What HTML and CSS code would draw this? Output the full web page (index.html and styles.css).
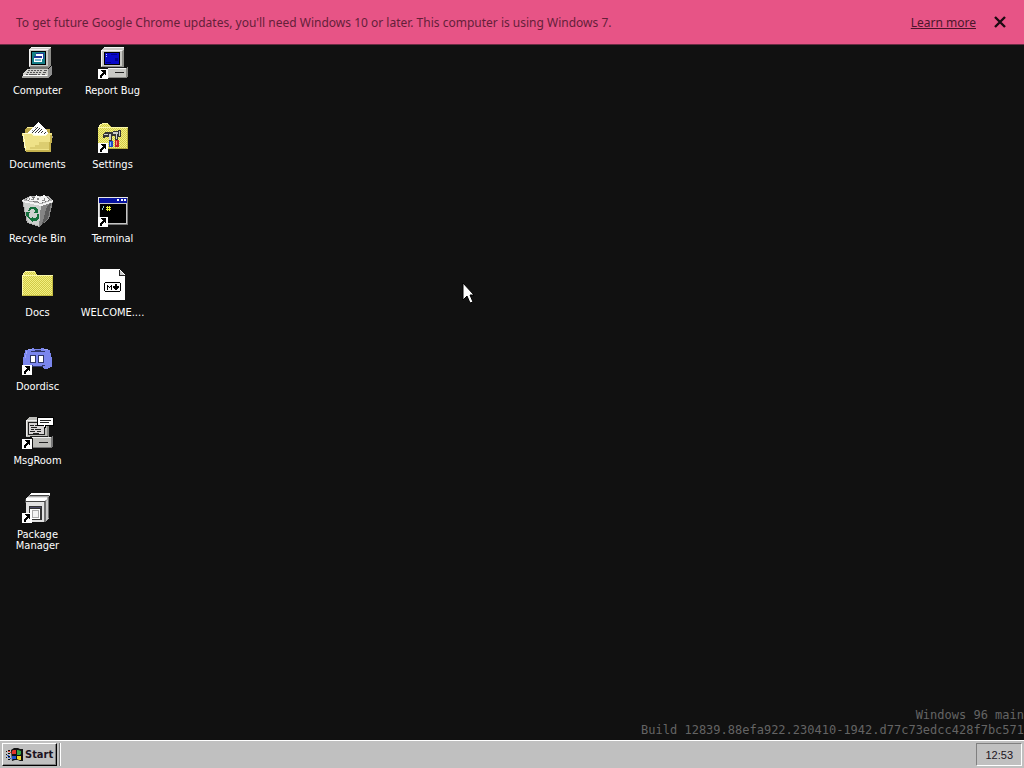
FILE: index.html
```html
<!DOCTYPE html>
<html lang="en">
<head>
  <meta charset="utf-8">
  <meta name="viewport" content="width=device-width, initial-scale=1">
  <link rel="stylesheet" href="styles.css">
  <title>Windows 96</title>
</head>
<body>

<!-- shared icon parts -->
<svg class="defs" aria-hidden="true">
  <defs>
    <pattern id="dither" width="2" height="2" patternUnits="userSpaceOnUse">
      <path fill="#f4f080" d="M0 0h2v2h-2z"/>
      <path fill="#d0ca48" d="M0 0h1v1h-1zM1 1h1v1h-1z"/>
    </pattern>
    <g id="shortcut">
      <path fill="#fff" d="M1 22h10v10H1z"/>
      <path fill="#000" d="M4 23h5v5h-1v-1h-1v1h-1v1h-1v2h-2v-3h1v-1h1v-1h1v-1h-1v-1h-1z"/>
    </g>
  </defs>
</svg>

<div class="container">
  <div class="infobar">
    <span class="message">To get future Google Chrome updates, you'll need Windows 10 or later. This computer is using Windows 7.</span>
    <a class="learnMore" href="#">Learn more</a>
    <button class="closeBtn" type="button" aria-label="Close">
      <svg width="12" height="12" viewBox="0 0 12 12"><path d="M1 1l10 10M11 1l-10 10" fill="none" stroke="#1c0a12" stroke-width="2.4"/></svg>
    </button>
  </div>

  <main class="desktop">
    <div class="icons">
      <button class="icon" type="button">
        <svg viewBox="0 0 32 32">
          <path fill="#c8c8c4" d="M7 2l2-2h20v1l-2 2v17H7z"/>
          <path fill="#f4f4f4" d="M9 0h20v1H9zM7 2h19v1H7zM7 2h1v17H7z"/>
          <path fill="#8c8c88" d="M26 3l3-2v18l-3 2zM8 19h18v1H8z"/>
          <path fill="#000" d="M9 4h15v14H9z"/>
          <path fill="#167f88" d="M10 5h13v12H10z"/>
          <path fill="#fff" d="M14 6h8v6h-8zM12 9h8v6h-8z"/>
          <path fill="#22399c" d="M14 6h8v1h-8zM12 9h8v2h-8zM21 7h1v5h-1z"/>
          <path fill="#73b8cc" d="M13 12h6v2h-6z"/>
          <path fill="#73736f" d="M8 20h18v2H8z"/>
          <path fill="#d0d0cc" d="M5 22h21l3-2-3 9H1v-2z"/>
          <path fill="#909090" d="M26 22l4-3v8l-4 4z"/>
          <path fill="#555" d="M6 23h2v1H6zM9 23h2v1H9zM12 23h2v1h-2zM15 23h2v1h-2zM18 23h2v1h-2zM22 23h3v1h-3zM5 25h2v1H5zM8 25h2v1H8zM11 25h2v1h-2zM14 25h2v1h-2zM17 25h2v1h-2zM21 25h3v1h-3zM4 27h2v1H4zM7 27h8v1H7zM16 27h2v1h-2zM20 27h3v1h-3z"/>
          <path fill="#fff" d="M1 28h24v1H1z"/>
          <path fill="#a0a09c" d="M0 29h26v2H0z"/>
        </svg>
        <span class="label">Computer</span>
      </button>
      <button class="icon" type="button">
        <svg viewBox="0 0 32 32">
          <path fill="#b9a648" d="M3 8l2-2h6l2 2h15v14H3z"/>
          <path fill="#fbf3a0" d="M5 6h6v1H5z"/>
          <path fill="#fff" d="M6 12L16 1l3 2 12 14-10 9z"/>
          <path fill="#8f8f8f" d="M10 9h1v1h-1zM13 6h1v1h-1zM27 12h1v2h-1zM30 15h1v2h-1z"/>
          <path stroke="#333" fill="none" d="M10 12l6-6M13 12l5-5M16 12l4-4M19 12l2-2M22 13l2-2"/>
          <path fill="#efe288" d="M0 12h10l2 2h12l2-2h4l-2 18H3z"/>
          <path fill="#fffccf" d="M0 12h10l2 2h12v1H11l-2-2H1zM1 14h1l2 14H3z"/>
          <path fill="#c5b24e" d="M28 14h2l-1 17H4v-2h23z"/>
          <path fill="#dccd70" d="M17 21h10v7H8v-2h5v-2h4z"/>
        </svg>
        <span class="label">Documents</span>
      </button>
      <button class="icon" type="button">
        <svg viewBox="0 0 32 32">
          <path fill="#b0b0b0" d="M0 5l8-4h18l5 5-4 18-10 8-12-4z"/>
          <path fill="#858585" d="M19 9l12-3-4 18-10 8z"/>
          <path fill="#5c5c5c" d="M25 11l4-3-3 16-6 5z"/>
          <path fill="#cdd0ce" d="M1 6l18 4-2 21-11-4z"/>
          <path fill="#f2f2f2" d="M0 5l19 4v2L1 7zM19 9l12-4v2l-12 4z"/>
          <path fill="#6c6c6c" d="M3 5l8-3h14l3 3-9 3z"/>
          <path fill="#f4f4f4" d="M4 5l4-4 4 3 2-4 4 2 4-2 3 3 2 2-8 3z"/>
          <path fill="#8b8b8b" d="M9 4h3v1H9zM15 3h2v2h-2zM20 5h3v1h-3zM12 6h4v1h-4zM22 3h1v2h-1zM7 3h1v2H7z"/>
          <path fill="#14703c" d="M8 12h5l2 2 1-1v5h-4l1-2-2-2H9l-1 2H6zM4 17h5l-2 1v3l2 3H7l-3-4zM15 19h2v4l-3 3h-3v2l-3-4 3-2v1h2l2-2z"/>
        </svg>
        <span class="label">Recycle Bin</span>
      </button>
      <button class="icon" type="button">
        <svg viewBox="0 0 32 32">
          <path fill="url(#dither)" d="M0 7l1-1V4l2-2h10l2 4h16v21H0z"/>
          <path fill="#fbf8a8" d="M3 2h10v1H3zM2 3h1v1H2zM1 4h1v2H1zM0 6h31v1H0zM0 7h1v19H0z"/>
          <path fill="#c5bd43" d="M1 26h30v1H1zM30 7h1v20h-1z"/>
        </svg>
        <span class="label">Docs</span>
      </button>
      <button class="icon" type="button">
        <svg viewBox="0 0 32 32">
          <path fill="#7b86ee" d="M6 6h4V5h12v1h4v1h2v3h1v4h1v10h-2v1h-2v1h-4v-1h-1v-2H10v2H9v1H6v-1H3v-1H1V14h1v-4h1V7h3z"/>
          <path fill="#9da6f8" d="M6 6h4v1H6zM22 6h4v1h-4zM4 8h1v3H4zM3 12h1v3H3z"/>
          <path fill="#111" d="M12 5h7v1h-7z"/>
          <path fill="#2e3568" d="M9 8h4V7h6v1h4v1H9zM8 12h6v8H8zM16 12h6v8h-6zM8 22h3v1h9v-1h3v1h-2v1H10v-1H8z"/>
          <path fill="#fff" d="M9 13h4v6H9zM17 13h4v6h-4z"/>
          <use href="#shortcut" x="-1"/>
        </svg>
        <span class="label">Doordisc</span>
      </button>
      <button class="icon" type="button">
        <svg viewBox="0 0 32 32">
          <path fill="#bdbdb9" d="M4 3l3-3h20v18l-2 2H4z"/>
          <path fill="#eee" d="M4 3h21v1H4zM4 3h1v16H4z"/>
          <path fill="#858581" d="M25 4l2-2v17l-2 2z"/>
          <path fill="#222" d="M6 5h17v13H6z"/>
          <path fill="#d8d5d5" d="M7 6h15v11H7z"/>
          <path fill="#222" d="M8 8h4v1H8zM13 8h3v1h-3zM9 10h6v1H9zM9 12h3v1H9zM13 12h6v1h-6zM8 14h5v1H8zM15 14h4v1h-4zM11 16h6v1h-6z"/>
          <path fill="#000" d="M15 0h17v9h-8v2h-1v1h-1V9h-7z"/>
          <path fill="#fff" d="M16 1h15v7h-8v2h-1V8h-6z"/>
          <path fill="#222" d="M18 3h11v1H18zM18 5h9v1h-9zM8 19h18v1H8z"/>
          <path fill="#bdbdb9" d="M11 21h19v10H11z"/>
          <path fill="#eee" d="M10 20h20v1H10z"/>
          <path fill="#777" d="M29 20l2-1v11l-2 1zM11 30h19v1H11z"/>
          <path fill="#222" d="M17 25h9v1h-9z"/>
          <use href="#shortcut" x="-1"/>
        </svg>
        <span class="label">MsgRoom</span>
      </button>
      <button class="icon" type="button">
        <svg viewBox="0 0 32 32">
          <path fill="#aaa" d="M3 8l6-6h19v3h-1v22l-4 4H4V12z"/>
          <path fill="#e2e2e2" d="M4 11h18v20H4zM5 6h20v3H5z"/>
          <path fill="#444" d="M3 8h1v4H3zM4 10h19v1H4zM8 4h19v1H8z"/>
          <path fill="#fff" d="M9 2h19v2H8zM4 7h21l-3 3H4z"/>
          <path fill="#6e6e6e" d="M22 11l1-1h1v20l-1 1h-1zM26 6h1v21h-1z"/>
          <path fill="#c8c8c8" d="M24 10l2-2v19l-2 2z"/>
          <path fill="#333" d="M7 15h13v14H7z"/>
          <path fill="#fff" d="M8 18h10v10H8z"/>
          <path fill="#4b4b69" d="M8 16h11v1H8z"/>
          <path fill="#aaa" d="M10 19h7v8h-7z"/>
          <path fill="#f4f4f4" d="M11 20h5v6h-5z"/>
          <use href="#shortcut" x="-1"/>
        </svg>
        <span class="label">Package Manager</span>
      </button>
      <button class="icon" type="button">
        <svg viewBox="0 0 32 32">
          <path fill="#c8c8c4" d="M4 3l3-3h20v18l-2 2H4z"/>
          <path fill="#f4f4f4" d="M7 0h20v1H6zM4 3h21v1H4zM4 3h1v16H4z"/>
          <path fill="#8d8d89" d="M25 4l2-2v17l-2 2zM5 19h20v1H5z"/>
          <path fill="#000" d="M7 5h16v13H7z"/>
          <path fill="#0808c8" d="M8 6h14v11H8z"/>
          <path fill="#00008e" d="M14 7h6v1h-6zM18 11h3v3h-3zM9 15h5v1H9z"/>
          <path fill="#bac6ff" d="M9 7h1v1H9zM9 9h1v1H9z"/>
          <path fill="#222" d="M8 20h19v1H8z"/>
          <path fill="#c8c8c4" d="M12 22h17v9H11v-9z"/>
          <path fill="#f4f4f4" d="M11 21h19v1H11z"/>
          <path fill="#898985" d="M29 21l2-2v10l-2 3zM12 30h18v1H12z"/>
          <path fill="#222" d="M18 25h9v1h-9z"/>
          <use href="#shortcut"/>
        </svg>
        <span class="label">Report Bug</span>
      </button>
      <button class="icon" type="button">
        <svg viewBox="0 0 32 32">
          <path fill="url(#dither)" d="M1 6l2-2 2-1h6l3 3h17v22H1z"/>
          <path fill="#fbf8a8" d="M5 2h6v1H5zM3 3h2v1H3zM2 4h1v2H2zM1 6h30v1H1z"/>
          <path fill="#b5ad3d" d="M2 27h29v1H2zM30 7h1v21h-1z"/>
          <!-- hammer and wrench -->
          <path fill="#333" d="M6 13l2-2h8v-1h5V9h3v7h-3v3h-3v-4h-3v5h-3v-4H8v1H6z"/>
          <path fill="#ccc" d="M7 13h4v1H7zM12 13h2v6h-2zM16 11h5v2h-5zM19 13h1v5h-1zM22 10h1v5h-1z"/>
          <path fill="#1e49c4" d="M12 20h4v6h-4z"/>
          <path fill="#82b5ff" d="M13 21h1v4h-1z"/>
          <path fill="#c42226" d="M18 19h4v7h-4z"/>
          <path fill="#ff8d87" d="M19 20h1v4h-1z"/>
          <use href="#shortcut"/>
        </svg>
        <span class="label">Settings</span>
      </button>
      <button class="icon" type="button">
        <svg viewBox="0 0 32 32">
          <path fill="#c6c6c6" d="M1 2h30v28H1z"/>
          <path fill="#e8e8e8" d="M1 2h30v1H1zM1 2h1v28H1z"/>
          <path fill="#777" d="M30 3h1v27H2v-1h28z"/>
          <path fill="#0612a0" d="M2 3h28v5H2z"/>
          <path fill="#fff" d="M20 4h2v2h-2zM24 4h2v2h-2zM27 4h2v2h-2z"/>
          <path fill="#000" d="M3 9h26v19H3z"/>
          <path fill="#8ac9d1" d="M6 11h1v2H6zM5 13h1v2H5z"/>
          <path fill="#eaf03b" d="M10 11h1v5h-1zM12 11h1v5h-1zM9 12h5v1H9zM9 14h5v1H9z"/>
          <use href="#shortcut"/>
        </svg>
        <span class="label">Terminal</span>
      </button>
      <button class="icon" type="button">
        <svg viewBox="0 0 32 32">
          <path fill="#fff" d="M3 0h19l6 6v25H3z"/>
          <path fill="#222" d="M22 1h1v5h5v1h-6z"/>
          <path fill="#ccc" d="M23 2l4 4h-4z"/>
          <path fill="#000" d="M8 13h15v1h1v8h-1v1H8v-1H7v-8h1z"/>
          <path fill="#fff" d="M8 14h15v8H8z"/>
          <path fill="#000" d="M10 16h1v1h1v1h1v-1h1v-1h1v5h-1v-3h-1v1h-1v-1h-1v3h-1zM18 15h2v2h2v2h-1v1h-1v1h-2v-1h-1v-1h-1v-2h2z"/>
        </svg>
        <span class="label">WELCOME....</span>
      </button>
    </div>
    <p class="version">Windows 96 main<br>Build 12839.88efa922.230410-1942.d77c73edcc428f7bc571</p>
    <svg class="cursor" width="14" height="22" viewBox="0 0 14 22">
      <path fill="#fff" stroke="#000" d="M1 0v17l4-4 3 7 3-1-3-7h4z"/>
    </svg>
  </main>

  <footer class="taskbar">
    <button class="startBtn" type="button">
      <svg width="17" height="14" viewBox="0 0 17 14">
        <path fill="#111" d="M5 2l3-2h4l2 1h3v12h-3l-2-1H9l-3 1zM0 3h1v1H0zM0 6h1v1H0zM0 9h1v1H0zM2 2h2v1H2zM2 5h2v1H2zM2 8h2v1H2zM2 11h2v1H2z"/>
        <path fill="#e3362b" d="M7 2h3v4H6V3zM2 3h2v1H2zM4 4h1v1H4z"/>
        <path fill="#36a548" d="M12 2l3 1v3l-1 1h-3V2z"/>
        <path fill="#2456cf" d="M6 8h4v3H7l-1 1zM2 9h2v1H2zM4 10h1v1H4zM1 7h2v1H1z"/>
        <path fill="#f0d52d" d="M11 8h4v4h-2l-2-1z"/>
      </svg>
      Start
    </button>
    <div class="separator"></div>
    <time class="clock">12:53</time>
  </footer>
</div>

</body>
</html>
```

FILE: styles.css
```css
html, body {
  height: 100%;
  margin: 0;
}

button {
  border: 0;
  padding: 0;
  background: none;
  font: inherit;
  color: inherit;
}

.defs {
  position: absolute;
  width: 0;
  height: 0;
}

.container {
  display: flex;
  flex-direction: column;
  min-height: 100%;
  background-color: #111111;
  font-family: 'DejaVu Sans Condensed', 'DejaVu Sans', sans-serif;
  font-size: 11px;
}

.infobar {
  display: flex;
  align-items: center;
  box-sizing: border-box;
  height: 45px;
  padding: 0 16px;
  background-color: #e75486;
  border-bottom: 1px solid #6b2c44;
  color: #642039;
  font-family: 'Noto Sans', sans-serif;
  font-size: 12px;
}

.message {
  flex: 1;
}

.learnMore {
  color: #4c162b;
}

.closeBtn {
  display: flex;
  margin-left: 18px;
  margin-right: 2px;
}

.desktop {
  position: relative;
  flex: 1;
  display: flex;
  justify-content: space-between;
  overflow: hidden;
}

.icons {
  display: grid;
  grid-template-rows: repeat(7, 74px);
  grid-auto-flow: column;
  grid-auto-columns: 75px;
  padding-top: 2px;
}

.icon {
  display: flex;
  flex-direction: column;
  align-items: center;
  color: #ffffff;
  line-height: 11px;
}

.icon svg {
  width: 32px;
  height: 32px;
  margin-bottom: 6px;
  shape-rendering: crispEdges;
}

.label {
  max-width: 66px;
}

.version {
  align-self: flex-end;
  margin: 0 0 2px;
  color: #646464;
  font-family: 'DejaVu Sans Mono', monospace;
  font-size: 12px;
  line-height: 15px;
  text-align: right;
  white-space: nowrap;
}

.cursor {
  position: absolute;
  left: 462px;
  top: 238px;
}

.taskbar {
  display: flex;
  align-items: stretch;
  box-sizing: border-box;
  height: 28px;
  padding: 2px;
  background-color: #c0c0c0;
  border-top: 1px solid #ffffff;
}

.startBtn {
  display: flex;
  align-items: center;
  gap: 2px;
  padding: 0 3px;
  border: 1px solid;
  border-color: #ffffff #000000 #000000 #ffffff;
  box-shadow: inset -1px -1px #808080;
  color: #1c1422;
  font-weight: bold;
}

.separator {
  margin: 0 2px;
  border-left: 1px solid #808080;
  border-right: 1px solid #ffffff;
}

.clock {
  display: flex;
  align-items: center;
  margin-left: auto;
  padding: 0 8px;
  border: 1px solid;
  border-color: #808080 #ffffff #ffffff #808080;
  color: #1c1422;
  font-family: 'Liberation Sans', sans-serif;
}
```
